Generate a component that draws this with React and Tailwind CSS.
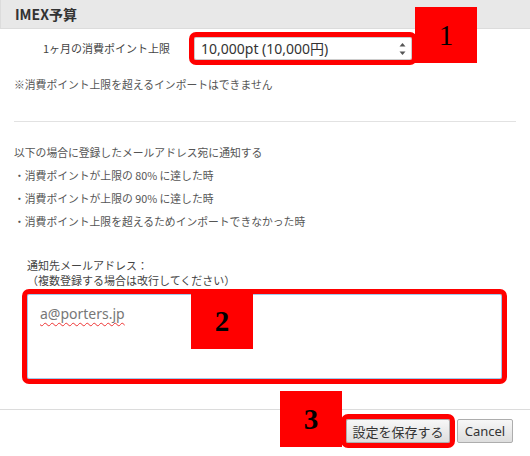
import React from "react";

const jp = { fontFamily: '"Noto Sans CJK JP", "Noto Sans", sans-serif' };

function Badge({ n, className, bold = true }) {
  return (
    <div
      className={`absolute w-[62px] h-[56px] bg-[#ff0000] flex items-center justify-center text-[29px] text-black leading-none ${bold ? "font-bold" : "font-normal"} ${className}`}
      style={{ fontFamily: '"Liberation Serif", "DejaVu Serif", serif' }}
    >
      {n}
    </div>
  );
}

export default function App() {
  return (
    <div className="relative w-[530px] h-[456px] bg-white overflow-hidden text-[#555]" style={jp}>
      {/* header */}
      <div className="h-[29px] bg-[#e8e8e8] border-b border-l border-[#dcdcdc] flex items-center pl-[14px]">
        <span className="text-[14px] font-bold text-[#333] leading-none">IMEX予算</span>
      </div>

      {/* limit row */}
      <div className="flex items-center mt-[8px] h-[23px]">
        <div className="pl-[43px] w-[194px] text-[11px] text-[#444]">1ヶ月の消費ポイント上限</div>
        <div className="w-[218px] h-[23px] bg-white border border-[#ccc] rounded-[2px] outline-[5px] outline-[#ff0000] outline-offset-0 flex items-center pl-[6px] pr-[5px] justify-between">
          <span className="text-[14px] text-[#333] leading-none" style={{ fontFamily: '"Noto Sans", "Noto Sans CJK JP", sans-serif' }}>
            10,000pt (10,000円)
          </span>
          <svg width="7" height="14" viewBox="0 0 7 14">
            <path d="M0.5 4.5 L3.5 1 L6.5 4.5 Z" fill="#555" />
            <path d="M0.5 9.5 L3.5 13 L6.5 9.5 Z" fill="#555" />
          </svg>
        </div>
      </div>

      <div className="mt-[16px] pl-[14px] text-[10.8px] leading-[16px]">※消費ポイント上限を超えるインポートはできません</div>

      <div className="mx-[14px] mt-[29px] border-t border-[#e2e2e2]" />

      <div className="mt-[19px] pl-[14px] text-[10.8px] leading-[23px]">
        <div>以下の場合に登録したメールアドレス宛に通知する</div>
        <div>・消費ポイントが上限の 80% に達した時</div>
        <div>・消費ポイントが上限の 90% に達した時</div>
        <div>・消費ポイント上限を超えるためインポートできなかった時</div>
      </div>

      <div className="mt-[25px] pl-[27px] text-[11px] leading-[15px] text-[#444]">
        <div>通知先メールアドレス：</div>
        <div>（複数登録する場合は改行してください）</div>
      </div>

      <div className="mt-[6px] ml-[27px] w-[475px] h-[85px] bg-white border border-[#9ecaed] rounded-[2px] outline-[5px] outline-[#ff0000] pl-[12px] pt-[5px]">
        <span
          className="text-[14px] text-[#777] underline decoration-wavy decoration-[#e33] decoration-1 underline-offset-[3px]"
          style={{ fontFamily: '"Noto Sans", sans-serif' }}
        >
          a@porters.jp
        </span>
      </div>

      {/* footer */}
      <div className="mt-[30px] border-t border-[#dcdcdc] flex justify-end gap-[7px] pt-[9px] pr-[17px]">
        <button className="w-[104px] h-[24px] border border-[#adadad] rounded-[2px] bg-gradient-to-b from-[#f7f7f7] to-[#dedede] outline-[5px] outline-[#ff0000] text-[13px] text-[#333] leading-none">
          設定を保存する
        </button>
        <button
          className="w-[56px] h-[24px] border border-[#adadad] rounded-[2px] bg-gradient-to-b from-[#f7f7f7] to-[#dedede] text-[13px] text-[#333] leading-none"
          style={{ fontFamily: '"Noto Sans", sans-serif' }}
        >
          Cancel
        </button>
      </div>

      <Badge n="1" className="left-[415px] top-[7px]" bold={false} />
      <Badge n="2" className="left-[191px] top-[293px]" />
      <Badge n="3" className="left-[280px] top-[391px]" />
    </div>
  );
}
